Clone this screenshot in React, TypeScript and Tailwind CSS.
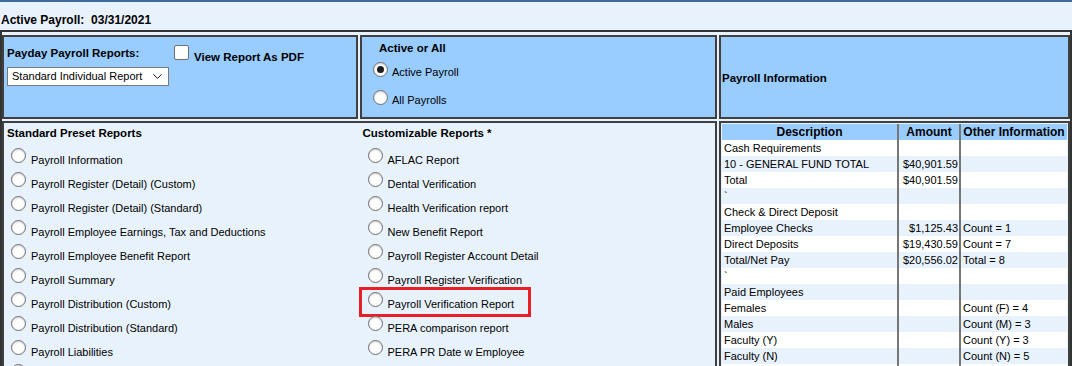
import { ChevronDown } from "lucide-react";

const standardReports = [
  "Payroll Information",
  "Payroll Register (Detail) (Custom)",
  "Payroll Register (Detail) (Standard)",
  "Payroll Employee Earnings, Tax and Deductions",
  "Payroll Employee Benefit Report",
  "Payroll Summary",
  "Payroll Distribution (Custom)",
  "Payroll Distribution (Standard)",
  "Payroll Liabilities",
  "",
];

const customReports = [
  "AFLAC Report",
  "Dental Verification",
  "Health Verification report",
  "New Benefit Report",
  "Payroll Register Account Detail",
  "Payroll Register Verification",
  "Payroll Verification Report",
  "PERA comparison report",
  "PERA PR Date w Employee",
];

const infoRows: [string, string, string][] = [
  ["Cash Requirements", "", ""],
  ["10 - GENERAL FUND TOTAL", "$40,901.59", ""],
  ["Total", "$40,901.59", ""],
  ["`", "", ""],
  ["Check & Direct Deposit", "", ""],
  ["Employee Checks", "$1,125.43", "Count = 1"],
  ["Direct Deposits", "$19,430.59", "Count = 7"],
  ["Total/Net Pay", "$20,556.02", "Total = 8"],
  ["`", "", ""],
  ["Paid Employees", "", ""],
  ["Females", "", "Count (F) = 4"],
  ["Males", "", "Count (M) = 3"],
  ["Faculty (Y)", "", "Count (Y) = 3"],
  ["Faculty (N)", "", "Count (N) = 5"],
  ["", "", ""],
];

function Radio({ checked = false }: { checked?: boolean }) {
  return (
    <span className="flex h-[15px] w-[15px] shrink-0 items-center justify-center rounded-full border border-[#6e6e6e] bg-white shadow-[inset_0_1px_2px_rgba(0,0,0,0.2)]">
      {checked && <span className="h-[7px] w-[7px] rounded-full bg-[#1e1e1e]" />}
    </span>
  );
}

function ReportRow({ label, highlight = false }: { label: string; highlight?: boolean }) {
  return (
    <div className="relative flex h-[24px] items-start">
      <Radio />
      <span className="ml-[5px] mt-[6px] whitespace-nowrap leading-[13px]">{label}</span>
      {highlight && (
        <div className="absolute left-[-9px] top-[-5px] h-[30px] w-[172px] border-[3px] border-[#e81f27]" />
      )}
    </div>
  );
}

export default function App() {
  return (
    <div className="h-[366px] w-[1072px] overflow-hidden bg-[#e8f2fc] font-['Liberation_Sans',Arial,sans-serif] text-[11px] text-black">
      <div className="h-[2px] bg-[#3f6c9f]" />
      <div className="flex h-[28px] items-end pb-[3px] pl-[1px] text-[12px] font-bold leading-[13px]">
        Active Payroll:&nbsp; 03/31/2021
      </div>

      <div className="border-x-2 border-t-2 border-[#333] pt-[3px]">
        <div className="grid grid-cols-[356px_357px_1fr] grid-rows-[84px_260px] gap-[2px]">
          {/* payday reports */}
          <div className="border-2 border-[#404040] bg-[#99ccff] pl-[3px]">
            <div className="flex h-[28px] items-start">
              <span className="mt-[10px] w-[167px] text-[11.5px] font-bold leading-[13px]">Payday Payroll Reports:</span>
              <span className="mt-[8px] h-[15px] w-[15px] rounded-[2px] border border-[#6f6f6f] bg-white" />
              <span className="ml-[5px] mt-[14px] text-[11.5px] font-bold leading-[13px]">View Report As PDF</span>
            </div>
            <div className="mt-[2px] flex h-[19px] w-[162px] items-center justify-between border border-[#7a7a7a] bg-white pl-[4px] pr-[3px]">
              <span className="leading-[13px]">Standard Individual Report</span>
              <ChevronDown size={15} strokeWidth={1.5} />
            </div>
          </div>

          {/* active or all */}
          <div className="border-2 border-[#404040] bg-[#99ccff] pt-[5px]">
            <div className="pl-[17px] text-[11.5px] font-bold leading-[13px]">Active or All</div>
            <div className="mt-[7px] pl-[11px]">
              <div className="flex h-[28px] items-start">
                <Radio checked />
                <span className="ml-[4px] mt-[4px] leading-[13px]">Active Payroll</span>
              </div>
              <div className="flex h-[24px] items-start">
                <Radio />
                <span className="ml-[4px] mt-[4px] leading-[13px]">All Payrolls</span>
              </div>
            </div>
          </div>

          {/* payroll info title */}
          <div className="flex items-center border-2 border-[#404040] bg-[#99ccff] pl-[1px] pt-[2px]">
            <span className="text-[11.5px] font-bold leading-[13px]">Payroll Information</span>
          </div>

          {/* report lists */}
          <div className="col-span-2 grid grid-cols-2 border-2 border-[#404040]">
            <div className="pt-[4px]">
              <div className="pl-[3px] text-[11.5px] font-bold leading-[13px]">Standard Preset Reports</div>
              <div className="mt-[8px] pl-[7px]">
                {standardReports.map((r, i) => (
                  <ReportRow key={i} label={r} />
                ))}
              </div>
            </div>
            <div className="pt-[4px]">
              <div className="pl-[3px] text-[11.5px] font-bold leading-[13px]">Customizable Reports *</div>
              <div className="mt-[8px] pl-[8px]">
                {customReports.map((r) => (
                  <ReportRow key={r} label={r} highlight={r === "Payroll Verification Report"} />
                ))}
              </div>
            </div>
          </div>

          {/* payroll info table */}
          <div className="border-2 border-[#404040] p-[1px]">
            <div className="grid grid-cols-[175px_62px_1fr] bg-[#99ccff] text-[12px] font-bold leading-[16px]">
              <div className="text-center">Description</div>
              <div className="border-l-2 border-[#777] text-center">Amount</div>
              <div className="border-l-2 border-[#777] text-center">Other Information</div>
            </div>
            {infoRows.map(([d, a, o], i) => (
              <div
                key={i}
                className={`grid h-[16px] grid-cols-[175px_62px_1fr] leading-[16px] ${i % 2 === 0 ? "bg-white" : "bg-[#e8f2fc]"}`}
              >
                <div className="pl-[2px]">{d}</div>
                <div className="border-l-2 border-[#777] pr-[1px] text-right">{a}</div>
                <div className="border-l-2 border-[#777] pl-[2px]">{o}</div>
              </div>
            ))}
          </div>
        </div>
      </div>
    </div>
  );
}
